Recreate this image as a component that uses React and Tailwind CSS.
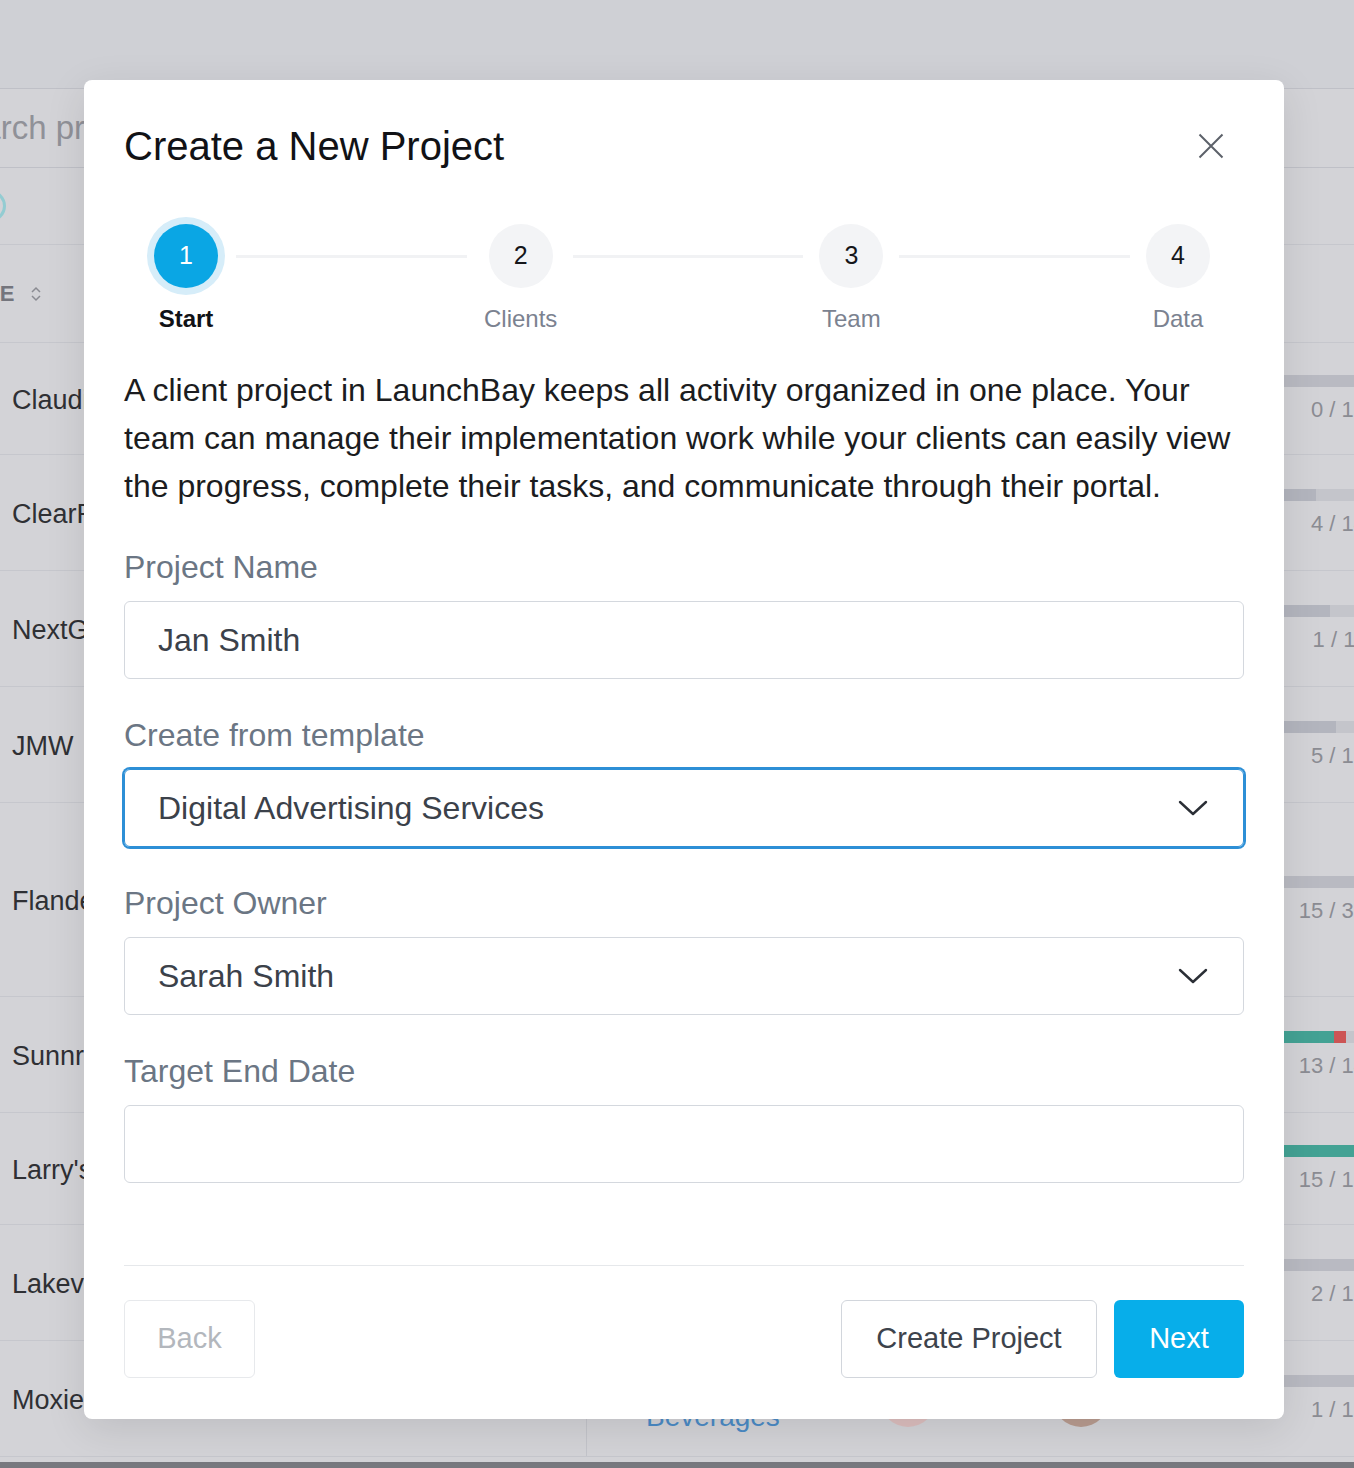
import { useState } from 'react';

const projects = [
  { name: 'Claudia Wellness', h: 'h-[112px]', done: 0, total: 12, fill: 0 },
  { name: 'ClearPoint Dental', h: 'h-[116px]', done: 4, total: 14, fill: 32 },
  { name: 'NextGen Fitness', h: 'h-[116px]', done: 1, total: 11, fill: 46 },
  { name: 'JMW', h: 'h-[116px]', done: 5, total: 16, fill: 52 },
  { name: 'Flanders Home', h: 'h-[194px]', done: 15, total: 32, fill: 0 },
  { name: 'Sunnrise Farms', h: 'h-[116px]', done: 13, total: 14, teal: 50, red: 12 },
  { name: "Larry's Auto", h: 'h-[112px]', done: 15, total: 15, teal: 200 },
  { name: 'Lakeview Realty', h: 'h-[116px]', done: 2, total: 18, fill: 0 },
  { name: 'Moxie Launch', client: ['Moxie Craft', 'Beverages'], h: 'h-[116px]', done: 1, total: 12, fill: 0 },
];

const steps = ['Start', 'Clients', 'Team', 'Data'];
// gaps on either side of each connector line
const lineMargins = ['ml-[18px] mr-[22px]', 'ml-[20px] mr-[16px]', 'mx-[16px]'];

const Chevron = () => (
  <svg width="30" height="16" viewBox="0 0 30 16" fill="none" className="shrink-0">
    <path d="M2 2 L15 14 L28 2" stroke="#2b2f36" strokeWidth="2.4" strokeLinecap="round" strokeLinejoin="round" />
  </svg>
);

const ProgressCell = ({ p }) => (
  <div className="flex w-[156px] flex-col justify-center">
    <div className="flex h-[12px] w-full bg-[#c4c5cb]">
      {p.fill > 0 && <div className="h-full bg-[#b3b5be]" style={{ width: p.fill }} />}
      {p.teal && <div className="h-full bg-[#43a294]" style={{ width: p.teal }} />}
      {p.red && <div className="h-full bg-[#cc5555]" style={{ width: p.red }} />}
      {!p.teal && p.fill === 0 && <div className="h-full w-full bg-[#b9bac2]" />}
    </div>
    <div className="mt-[11px] pr-[74px] text-right text-[22px] leading-[24px] text-[#8b8c93]">
      {p.done} / {p.total}
    </div>
  </div>
);

const ProjectsTable = () => (
  <div className="w-[1440px]">
    <div className="h-[88px] bg-[#cfd0d5]" />
    <div className="flex h-[80px] items-center border-y border-[#bfc0c7]">
      <span className="-ml-[58px] text-[33px] text-[#909198]">Search projects</span>
    </div>
    <div className="flex h-[77px] items-center border-b border-[#c6c7cd]">
      <div className="-ml-[26px] h-[32px] w-[32px] rounded-full border-[3px] border-[#93ccd2]" />
    </div>
    <div className="flex h-[98px] items-center border-b border-[#c6c7cd]">
      <span className="-ml-[52px] text-[22px] font-bold tracking-wide text-[#74757d]">NAME</span>
      <svg width="14" height="20" viewBox="0 0 14 20" fill="none" className="ml-[14px]">
        <path d="M3 8 L7 4 L11 8 M3 12 L7 16 L11 12" stroke="#8a8b92" strokeWidth="1.5" />
      </svg>
    </div>
    {projects.map((p) => (
      <div key={p.name} className={`flex ${p.h} border-b border-[#c6c7cd]`}>
        <div className="flex w-[586px] items-center pl-[12px] pt-[4px] text-[27px] text-[#2f3034]">{p.name}</div>
        <div className="flex w-[294px] flex-col justify-center border-l border-[#c3c4ca] pl-[59px] text-[28px] leading-[36px] text-[#4b8bc6]">
          {p.client && (
            <>
              <span className="whitespace-nowrap">{p.client[0]}</span>
              <span>{p.client[1]}</span>
            </>
          )}
        </div>
        <div className="flex w-[173px] items-center">
          {p.client && <div className="h-[56px] w-[56px] rounded-full bg-[#dcbebe]" />}
        </div>
        <div className="flex w-[231px] items-center">
          {p.client && <div className="h-[56px] w-[56px] rounded-full bg-[#b99c90]" />}
        </div>
        <ProgressCell p={p} />
      </div>
    ))}
    <div className="h-[5px]" />
    <div className="h-[6px] w-[1354px] bg-[#77787e]" />
  </div>
);

const Field = ({ label, children, first }) => (
  <div className={first ? 'mt-[37px]' : 'mt-[36px]'}>
    <div className="text-[32px] leading-[40px] text-[#6b7684]">{label}</div>
    <div className="mt-[14px]">{children}</div>
  </div>
);

const NewProjectModal = () => {
  const [step] = useState(0);

  return (
    <div className="absolute left-[84px] top-[80px] w-[1200px] rounded-[8px] bg-white px-[40px] pb-[41px] pt-[44px] shadow-[0_10px_40px_rgba(0,0,0,0.10)]">
      <div className="flex items-center justify-between">
        <h2 className="text-[40px] leading-[44px] text-[#111216]">Create a New Project</h2>
        <button className="mr-[20px] flex h-[26px] w-[26px] items-center justify-center">
          <svg width="26" height="26" viewBox="0 0 26 26" fill="none">
            <path d="M1.5 1.5 L24.5 24.5 M24.5 1.5 L1.5 24.5" stroke="#5c6169" strokeWidth="2" />
          </svg>
        </button>
      </div>

      <div className="mt-[56px] flex items-start pl-[30px] pr-[34px]">
        {steps.map((s, i) => (
          <div key={s} className="contents">
            {i > 0 && <div className={`${lineMargins[i - 1]} mt-[31px] h-[3px] flex-1 bg-[#f1f2f4]`} />}
            <div className="flex w-[64px] flex-col items-center">
              <div
                className={
                  i === step
                    ? 'flex h-[64px] w-[64px] items-center justify-center rounded-full bg-[#0aa6e4] text-[25px] text-white ring-[7px] ring-[#d6edf9]'
                    : 'flex h-[64px] w-[64px] items-center justify-center rounded-full bg-[#f3f4f6] text-[25px] text-[#15161a]'
                }
              >
                {i + 1}
              </div>
              <div
                className={
                  i === step
                    ? 'mt-[15px] whitespace-nowrap text-[24px] font-bold leading-[32px] text-[#111216]'
                    : 'mt-[15px] whitespace-nowrap text-[24px] leading-[32px] text-[#7b8290]'
                }
              >
                {s}
              </div>
            </div>
          </div>
        ))}
      </div>

      <p className="mt-[31px] text-[32px] leading-[48px] text-[#1b1c20]">
        A client project in LaunchBay keeps all activity organized in one place. Your team can manage their
        implementation work while your clients can easily view the progress, complete their tasks, and communicate
        through their portal.
      </p>

      <Field label="Project Name" first>
        <div className="flex h-[78px] items-center rounded-[6px] border border-[#d4d8de] pl-[33px] text-[32px] text-[#3b414a]">
          Jan Smith
        </div>
      </Field>

      <Field label="Create from template">
        <div className="flex h-[78px] items-center justify-between rounded-[6px] border border-[#2d8fd6] pl-[33px] pr-[35px] text-[32px] text-[#3b414a] ring-2 ring-[#2d8fd6]">
          <span>Digital Advertising Services</span>
          <Chevron />
        </div>
      </Field>

      <Field label="Project Owner">
        <div className="flex h-[78px] items-center justify-between rounded-[6px] border border-[#d4d8de] pl-[33px] pr-[35px] text-[32px] text-[#3b414a]">
          <span>Sarah Smith</span>
          <Chevron />
        </div>
      </Field>

      <Field label="Target End Date">
        <div className="h-[78px] rounded-[6px] border border-[#d4d8de]" />
      </Field>

      <div className="mt-[82px] border-t border-[#e6e8eb]" />

      <div className="mt-[34px] flex items-center justify-between">
        <button className="h-[78px] w-[131px] rounded-[6px] border border-[#e7e9ec] text-[29px] text-[#b3b7bd]">Back</button>
        <div className="flex items-center gap-[17px]">
          <button className="h-[78px] w-[256px] rounded-[6px] border border-[#d2d6dc] text-[29px] text-[#3d434c]">
            Create Project
          </button>
          <button className="h-[78px] w-[130px] rounded-[6px] bg-[#07aeea] text-[29px] text-white">Next</button>
        </div>
      </div>
    </div>
  );
};

const App = () => (
  <div className="relative h-[1468px] w-[1354px] overflow-hidden bg-[#d3d3d7] font-['Liberation_Sans',Arial,sans-serif]">
    <ProjectsTable />
    <NewProjectModal />
  </div>
);

export default App;
